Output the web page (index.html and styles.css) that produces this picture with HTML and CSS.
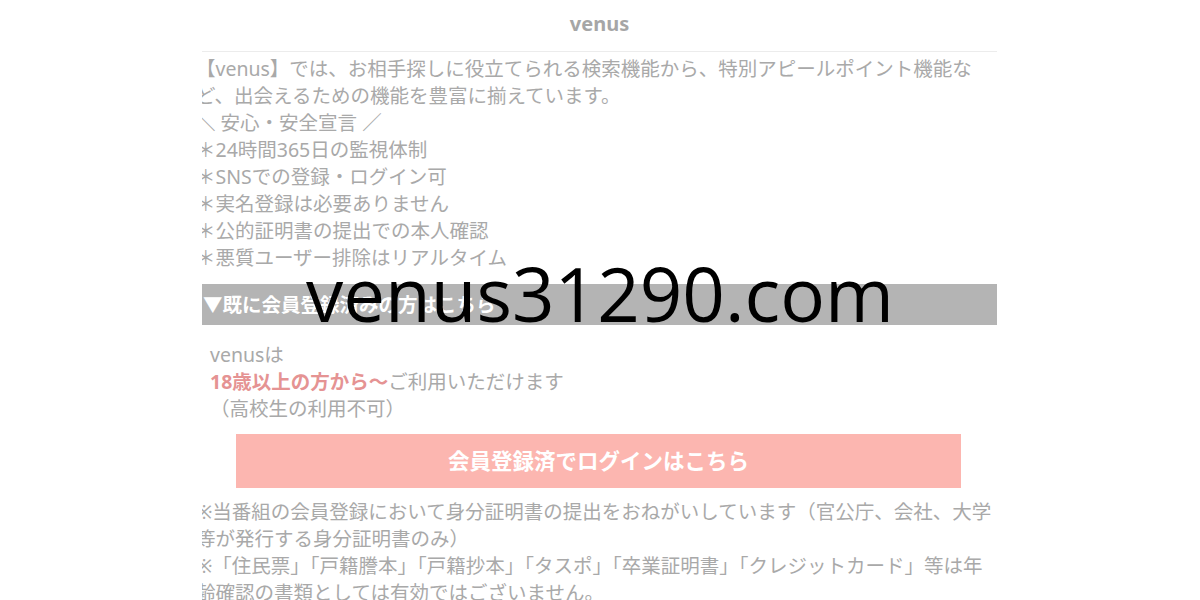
FILE: index.html
```html
<!DOCTYPE html>
<html lang="ja">
<head>
<meta charset="utf-8">
<title>venus</title>
<link rel="stylesheet" href="styles.css">
</head>
<body>
<div class="page">
  <header class="site-header">venus</header>
  <div class="intro">
    <p class="line">【venus】では、お相手探しに役立てられる検索機能から、特別アピールポイント機能な</p>
    <p class="line">ど、出会えるための機能を豊富に揃えています。</p>
    <p class="line">＼ 安心・安全宣言 ／</p>
    <p class="line">＊24時間365日の監視体制</p>
    <p class="line">＊SNSでの登録・ログイン可</p>
    <p class="line">＊実名登録は必要ありません</p>
    <p class="line">＊公的証明書の提出での本人確認</p>
    <p class="line">＊悪質ユーザー排除はリアルタイム</p>
  </div>
  <div class="section-bar">▼既に会員登録済みの方はこちら</div>
  <div class="age">
    <p class="line">venusは</p>
    <p class="line"><span class="accent">18歳以上の方から〜</span>ご利用いただけます</p>
    <p class="line">（高校生の利用不可）</p>
  </div>
  <a class="login-btn" href="#">会員登録済でログインはこちら</a>
  <div class="notes">
    <p class="line">※当番組の会員登録において身分証明書の提出をおねがいしています（官公庁、会社、大学</p>
    <p class="line">等が発行する身分証明書のみ）</p>
    <p class="line">※「住民票」「戸籍謄本」「戸籍抄本」「タスポ」「卒業証明書」「クレジットカード」等は年</p>
    <p class="line">齢確認の書類としては有効ではございません。</p>
  </div>
</div>
<div class="watermark">venus31290.com</div>
</body>
</html>
```
FILE: styles.css
```css
html, body {
  margin: 0;
  padding: 0;
  background: #ffffff;
}
body {
  font-family: "Noto Sans", "Noto Sans CJK JP", sans-serif;
  color: #a9a9a9;
  width: 1200px;
  height: 600px;
  overflow: hidden;
  position: relative;
}
p { margin: 0; }
.page {
  width: 795px;
  margin-left: 202px;
  overflow: hidden;
}
.site-header {
  height: 51px;
  line-height: 48px;
  text-align: center;
  font-weight: 700;
  font-size: 20px;
  color: #a6a6a6;
  border-bottom: 1px solid #ececec;
}
.line {
  white-space: nowrap;
  font-size: 19.5px;
  line-height: 27px;
}
.intro {
  margin-left: -6px;
  padding-top: 2.5px;
}
.section-bar {
  margin-top: 13.5px;
  height: 41px;
  line-height: 41px;
  background: #b4b4b4;
  color: #ffffff;
  font-weight: 700;
  font-size: 19.5px;
  white-space: nowrap;
  padding-left: 1px;
}
.age {
  margin-top: 15.5px;
  padding-left: 8px;
}
.accent {
  color: #e59393;
  font-weight: 700;
}
.login-btn {
  display: block;
  margin: 12.5px 0 0 34px;
  width: 725px;
  height: 54px;
  line-height: 54px;
  background: #fcb6b0;
  color: #ffffff;
  font-weight: 700;
  font-size: 21.5px;
  text-align: center;
  text-decoration: none;
}
.notes {
  margin-top: 9.5px;
  margin-left: -6px;
}
.watermark {
  position: absolute;
  top: 248px;
  left: 0;
  width: 1200px;
  text-align: center;
  font-family: "Open Sans", "Noto Sans", sans-serif;
  font-size: 74.5px;
  line-height: 90px;
  color: #000000;
}
```
